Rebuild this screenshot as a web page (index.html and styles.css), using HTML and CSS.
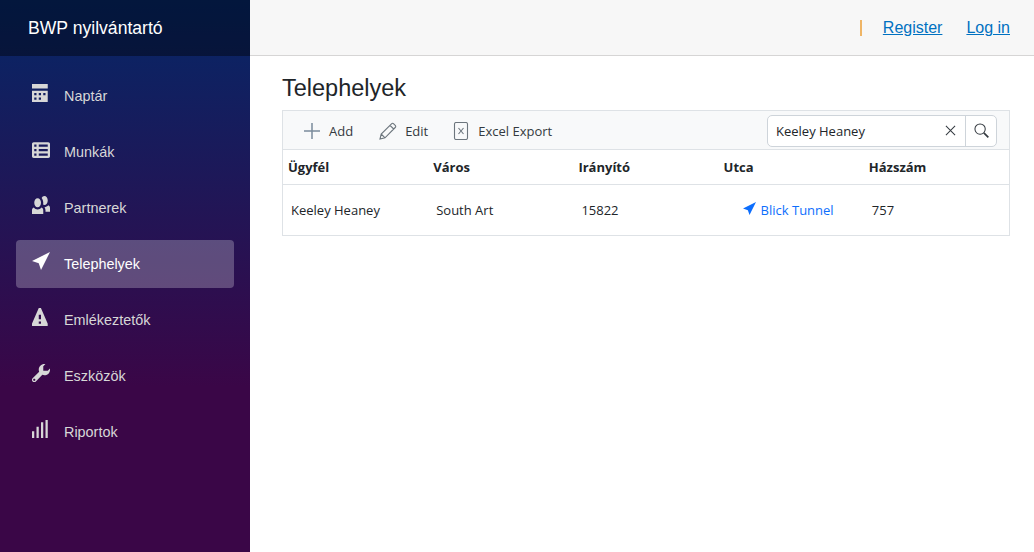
FILE: index.html
```html
<!DOCTYPE html>
<html lang="en">

<head>
    <meta charset="UTF-8">
    <meta name="viewport" content="width=device-width, initial-scale=1.0">
    <title>BWP nyilvántartó</title>
    <link rel="stylesheet" href="styles.css">
</head>

<body>
    <div class="sidebar">
        <div class="brand">BWP nyilvántartó</div>
        <nav class="nav-list">
            <a class="nav-link" href="#">
                <svg class="nav-icon" viewBox="0 0 8 8"><path d="M0 0v2h7v-2h-7zm0 3v4.910c0 .05.04.09.09.09h6.810c.05 0 .09-.04.09-.09v-4.910h-7.010zm1 1h1v1h-1v-1zm2 0h1v1h-1v-1zm2 0h1v1h-1v-1zm-4 2h1v1h-1v-1zm2 0h1v1h-1v-1z"/></svg>
                Naptár
            </a>
            <a class="nav-link" href="#">
                <svg class="nav-icon" viewBox="0 0 8 8"><path transform="translate(0 1)" d="M.75 0c-.41 0-.75.34-.75.75v5.500c0 .41.34.75.75.75h6.500c.41 0 .75-.34.75-.75v-5.500c0-.41-.34-.75-.75-.75h-6.500zm.25 1h1v1h-1v-1zm2 0h4v1h-4v-1zm-2 2h1v1h-1v-1zm2 0h4v1h-4v-1zm-2 2h1v1h-1v-1zm2 0h4v1h-4v-1z"/></svg>
                Munkák
            </a>
            <a class="nav-link" href="#">
                <svg class="nav-icon" viewBox="0 0 8 8"><path d="M5.500 0c-.51 0-.95.35-1.220.88.45.54.72 1.280.72 2.130 0 .29-.03.55-.09.81.19.11.38.19.59.19.83 0 1.500-.9 1.500-2s-.67-2-1.500-2zm-3 1c-.83 0-1.500.9-1.500 2s.67 2 1.500 2 1.500-.9 1.500-2-.67-2-1.500-2zm4.750 3.160c-.43.51-1.020.82-1.690.84.27.38.44.84.44 1.340v.66h2v-1.660c0-.52-.31-.97-.75-1.190zm-6.500 1c-.44.22-.75.67-.75 1.190v1.660h5v-1.660c0-.52-.31-.97-.75-1.190-.45.53-1.060.84-1.750.84s-1.300-.32-1.750-.84z"/></svg>
                Partnerek
            </a>
            <a class="nav-link active" href="#">
                <svg class="nav-icon" viewBox="0 0 8 8"><path d="M8 0l-8 4 3 1 1 3 4-8z"/></svg>
                Telephelyek
            </a>
            <a class="nav-link" href="#">
                <svg class="nav-icon" viewBox="0 0 8 8"><path d="M3.090 0c-.06 0-.1.04-.13.09l-2.940 6.810c-.02.05-.03.13-.03.19v.81c0 .05.04.09.09.09h6.810c.05 0 .09-.04.09-.09v-.81c0-.05-.01-.14-.03-.19l-2.940-6.810c-.02-.05-.07-.09-.13-.09h-.81zm-.09 3h1v2h-1v-2zm0 3h1v1h-1v-1z"/></svg>
                Emlékeztetők
            </a>
            <a class="nav-link" href="#">
                <svg class="nav-icon" viewBox="0 0 8 8"><path d="M5.500 0c-1.380 0-2.500 1.120-2.500 2.500 0 .32.08.62.19.91l-2.910 2.880c-.39.39-.39 1.050 0 1.440.2.2.46.28.72.28.26 0 .52-.09.72-.28l2.880-2.910c.28.11.58.19.91.19 1.380 0 2.500-1.120 2.500-2.500 0-.16 0-.32-.03-.47l-.97.97h-2v-2l.97-.97c-.15-.03-.31-.03-.47-.03zm-4.500 6.500c.28 0 .5.22.5.5s-.22.5-.5.5-.5-.22-.5-.5.22-.5.5-.5z"/></svg>
                Eszközök
            </a>
            <a class="nav-link" href="#">
                <svg class="nav-icon" viewBox="0 0 8 8"><path d="M6 0v8h1v-8h-1zm-2 1v7h1v-7h-1zm-2 2v5h1v-5h-1zm-2 2v3h1v-3h-1z"/></svg>
                Riportok
            </a>
        </nav>
    </div>

    <div class="main">
        <div class="top-row">
            <span class="divider"></span>
            <a href="#">Register</a>
            <a href="#">Log in</a>
        </div>

        <div class="content">
            <h1>Telephelyek</h1>

            <div class="grid">
                <div class="toolbar">
                    <button class="tool-btn" type="button">
                        <svg class="tool-icon" viewBox="0 0 18 18"><path class="line-blue" d="M9 1v16M1 9h16"/></svg>
                        Add
                    </button>
                    <button class="tool-btn" type="button">
                        <svg class="tool-icon" viewBox="0 0 18 18"><path class="line-grey" d="M1 17l1.200-5L12.500 1.800c.7-.7 1.500-.7 2.200 0l1.500 1.500c.7.7.7 1.500 0 2.200L6 15.800zM2.200 12L6 15.800M11 3.300l3.700 3.700"/></svg>
                        Edit
                    </button>
                    <button class="tool-btn" type="button">
                        <svg class="tool-icon" viewBox="0 0 18 18"><rect class="line-grey" x="2.500" y="0.500" width="13" height="17" rx="1.500"/><path class="line-grey" d="M6.500 6l5 6M11.500 6l-5 6"/></svg>
                        Excel Export
                    </button>

                    <div class="search-box">
                        <span class="search-text">Keeley Heaney</span>
                        <svg class="clear-icon" viewBox="0 0 12 12"><path class="line-dark" d="M1 1l10 10M11 1L1 11"/></svg>
                        <span class="search-btn">
                            <svg class="search-icon" viewBox="0 0 16 16"><circle class="line-dark" cx="6.500" cy="6.500" r="5.500"/><path class="line-handle" d="M10.500 10.500l4.800 4.800"/></svg>
                        </span>
                    </div>
                </div>

                <div class="grid-row grid-head">
                    <div>Ügyfél</div>
                    <div>Város</div>
                    <div>Irányító</div>
                    <div>Utca</div>
                    <div>Házszám</div>
                </div>
                <div class="grid-row grid-body">
                    <div>Keeley Heaney</div>
                    <div>South Art</div>
                    <div>15822</div>
                    <div class="street">
                        <svg class="street-icon" viewBox="0 0 8 8"><path d="M8 0l-8 4 3 1 1 3 4-8z"/></svg>
                        <a href="#">Blick Tunnel</a>
                    </div>
                    <div>757</div>
                </div>
            </div>
        </div>
    </div>
</body>

</html>
```
FILE: styles.css
```css
* {
    margin: 0;
    padding: 0;
    box-sizing: border-box;
}

body {
    font-family: "Liberation Sans", Arial, sans-serif;
    display: flex;
    height: 100vh;
    overflow: hidden;
    color: #212529;
    background: white;
}

.sidebar {
    width: 250px;
    flex-shrink: 0;
    background: linear-gradient(180deg, #052767 0%, #3a0647 70%);
}

.brand {
    height: 56px;
    padding-left: 28px;
    display: flex;
    align-items: center;
    font-size: 17.6px;
    color: white;
    background: rgba(0, 0, 0, 0.4);
}

.nav-list {
    padding: 16px 16px 0;
}

.nav-link {
    display: flex;
    align-items: center;
    height: 48px;
    margin-bottom: 8px;
    padding-left: 16px;
    border-radius: 4px;
    font-size: 14.4px;
    color: #d7d7d7;
    text-decoration: none;
}

.nav-link.active {
    background: rgba(255, 255, 255, 0.25);
    color: white;
}

.nav-icon {
    width: 18px;
    height: 18px;
    margin-right: 14px;
    margin-bottom: 6px;
    fill: currentColor;
    flex-shrink: 0;
}

.main {
    flex: 1;
    min-width: 0;
}

.top-row {
    height: 56px;
    padding-right: 24px;
    display: flex;
    align-items: center;
    justify-content: flex-end;
    background: #f7f7f7;
    border-bottom: 1px solid #d6d5d5;
    font-size: 16px;
}

.top-row a {
    color: #0071c1;
}

.top-row a + a {
    margin-left: 24px;
}

.divider {
    width: 2px;
    height: 16px;
    margin-right: 21px;
    background: #efb566;
}

.content {
    padding: 16px 24px 0 32px;
}

h1 {
    font-size: 23.5px;
    font-weight: 400;
    line-height: 32px;
    margin-bottom: 6px;
}

.grid {
    border: 1px solid #dee2e6;
    font-family: "Open Sans", "Noto Sans", sans-serif;
    font-size: 13px;
}

.toolbar {
    height: 39px;
    display: flex;
    align-items: center;
    padding: 1px 12px 0 20px;
    background: #f8f9fa;
    border-bottom: 1px solid #dee2e6;
}

.tool-btn {
    display: flex;
    align-items: center;
    gap: 8px;
    margin-right: 24px;
    border: none;
    background: none;
    font: inherit;
    color: #343a40;
}

.tool-btn:first-child {
    margin-right: 26px;
}

.tool-icon {
    width: 18px;
    height: 18px;
}

.line-blue,
.line-grey,
.line-dark,
.line-handle {
    fill: none;
}

.line-blue {
    stroke: #7a8b9c;
    stroke-width: 1.5;
}

.line-grey {
    stroke: #6c757d;
    stroke-width: 1.1;
}

.line-dark {
    stroke: #343a40;
    stroke-width: 1.1;
}

.line-handle {
    stroke: #343a40;
    stroke-width: 1.8;
}

.search-box {
    width: 230px;
    height: 32px;
    margin-left: auto;
    display: flex;
    align-items: center;
    background: white;
    border: 1px solid #ced4da;
    border-radius: 5px;
}

.search-text {
    flex: 1;
    padding-left: 8px;
    color: #212529;
}

.clear-icon {
    width: 11px;
    height: 11px;
    margin-right: 9px;
}

.search-btn {
    width: 31px;
    height: 100%;
    display: flex;
    align-items: center;
    justify-content: center;
    border-left: 1px solid #ced4da;
}

.search-icon {
    width: 15px;
    height: 15px;
}

.grid-row {
    display: grid;
    grid-template-columns: repeat(5, 1fr);
    align-items: center;
}

.grid-head {
    height: 35px;
    border-bottom: 1px solid #dee2e6;
    font-weight: 700;
}

.grid-head div {
    padding-left: 5px;
}

.grid-body {
    height: 50px;
}

.grid-body > div {
    padding-left: 8px;
}

.grid-body > .street {
    display: flex;
    align-items: center;
    gap: 5px;
    padding-left: 24px;
}

.street a {
    color: #0d6efd;
    text-decoration: none;
}

.street-icon {
    width: 13px;
    height: 13px;
    margin-bottom: 3px;
    fill: #0d6efd;
}
```
